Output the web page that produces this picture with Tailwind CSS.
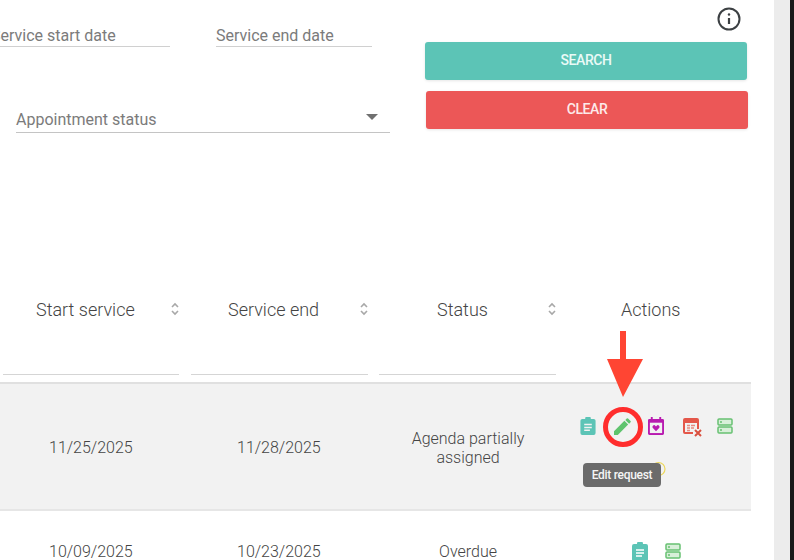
<!doctype html>
<html>
<head>
<meta charset="utf-8">
<script src="https://cdn.jsdelivr.net/npm/@tailwindcss/browser@4"></script>
</head>
<body class="m-0 h-[560px] w-[794px] overflow-hidden bg-[#191919] font-['Roboto',sans-serif]">
<div class="relative flex h-[560px] w-[790px]">
  <main class="h-full w-[774px] overflow-hidden bg-white">
    <section class="flex h-[280px] w-[774px]">
      <div class="w-[416px] shrink-0 overflow-hidden">
        <div class="flex pt-[26px]">
          <div class="ml-[-9px] w-[179px] shrink-0 whitespace-nowrap border-b border-[#d0d0d0] text-[16px] leading-[20px] text-[#7b7b7b]">Service start date</div>
          <div class="ml-[46px] w-[156px] shrink-0 whitespace-nowrap border-b border-[#d0d0d0] text-[16px] leading-[20px] text-[#7b7b7b]">Service end date</div>
        </div>
        <div class="ml-[16px] mt-[62px] flex w-[374px] items-center justify-between border-b border-[#c4c4c4] pb-[1px] pr-[12px] text-[16px] leading-[22px] text-[#7b7b7b]">
          <span>Appointment status</span>
          <svg width="12" height="6" viewBox="0 0 12 6" class="mb-[6px]"><path d="M0 0h12L6 6z" fill="#707070"/></svg>
        </div>
      </div>
      <div class="w-[358px] pt-[6px]">
        <div class="ml-[300px] h-[26px] w-[26px]">
          <svg width="26" height="26" viewBox="0 0 26 26" fill="none" stroke="#3c4043" stroke-width="2"><circle cx="13" cy="13" r="10.500"/><path d="M13 12v6" stroke-width="2.200"/><circle cx="13" cy="8.500" r="1.200" fill="#3c4043" stroke="none"/></svg>
        </div>
        <button class="ml-[9px] mt-[10px] block h-[38px] w-[322px] rounded-[3px] bg-[#5cc4b6] pb-[2px] text-[14px] font-medium tracking-[-0.4px] text-[#eafaf7] shadow-[0_1px_3px_rgba(0,0,0,0.1)]">SEARCH</button>
        <button class="ml-[10px] mt-[11px] block h-[38px] w-[322px] rounded-[3px] bg-[#ec5757] pb-[2px] text-[14px] font-medium tracking-[-0.4px] text-[#fdeaea] shadow-[0_1px_3px_rgba(0,0,0,0.1)]">CLEAR</button>
      </div>
    </section>

    <section class="w-[751px]">
      <div class="grid h-[104px] grid-cols-[180px_189px_189px_193px] border-b-2 border-[#e0e0e0] text-[18px] font-light text-[#444]">
        <div class="relative"><div class="pl-[36px] pt-[18px] leading-[24px]">Start service</div>
          <svg class="absolute left-[170px] top-[21px]" width="10" height="16" viewBox="0 0 10 16" fill="none" stroke="#a8a8a8" stroke-width="1.600"><path d="M2 6l3-3 3 3M2 10l3 3 3-3"/></svg>
          <div class="absolute bottom-[7px] left-[3px] h-px w-[176px] bg-[#d5d5d5]"></div></div>
        <div class="relative"><div class="pl-[48px] pt-[18px] leading-[24px]">Service end</div>
          <svg class="absolute left-[179px] top-[21px]" width="10" height="16" viewBox="0 0 10 16" fill="none" stroke="#a8a8a8" stroke-width="1.600"><path d="M2 6l3-3 3 3M2 10l3 3 3-3"/></svg>
          <div class="absolute bottom-[7px] left-[11px] h-px w-[177px] bg-[#d5d5d5]"></div></div>
        <div class="relative"><div class="pl-[68px] pt-[18px] leading-[24px]">Status</div>
          <svg class="absolute left-[178px] top-[21px]" width="10" height="16" viewBox="0 0 10 16" fill="none" stroke="#a8a8a8" stroke-width="1.600"><path d="M2 6l3-3 3 3M2 10l3 3 3-3"/></svg>
          <div class="absolute bottom-[7px] left-[10px] h-px w-[177px] bg-[#d5d5d5]"></div></div>
        <div class="pl-[63px] pt-[18px] leading-[24px]">Actions</div>
      </div>

      <div class="relative grid h-[127px] grid-cols-[180px_189px_189px_193px] border-b-2 border-[#e6e6e6] bg-[#f2f2f2] text-[16px] font-light text-[#444]">
        <div class="pl-[49px] pt-[53px] leading-[22px]">11/25/2025</div>
        <div class="pl-[57px] pt-[53px] leading-[22px]">11/28/2025</div>
        <div class="pl-[40px] pr-[31px] pt-[45px] text-center leading-[19px]">Agenda partially assigned</div>
        <div class="flex items-start pl-[21px] pt-[33px]">
          <svg width="18" height="18" viewBox="0 0 18 19"><path fill="#5cc4b6" d="M3 2h3a3 3 0 0 1 6 0h3a2 2 0 0 1 2 2v13a2 2 0 0 1-2 2H3a2 2 0 0 1-2-2V4a2 2 0 0 1 2-2z"/><path stroke="#f2f2f2" stroke-width="1.600" d="M5 8h8M5 11h8M5 14h6"/></svg>
          <svg class="ml-[17px] mt-[1px]" width="17" height="17" viewBox="0 0 18 18"><path fill="#5fc46e" d="M0 18v-4L11 3l4 4L4 18zM12 2l1.500-1.500a1 1 0 0 1 1.400 0l2.600 2.600a1 1 0 0 1 0 1.400L16 6z"/></svg>
          <svg class="ml-[17px]" width="16" height="18" viewBox="0 0 17 19"><path fill="#b81bb0" d="M3 0h2v2h7V0h2v2h1.500A1.500 1.500 0 0 1 17 3.500V17.500A1.500 1.500 0 0 1 15.500 19h-14A1.500 1.500 0 0 1 0 17.500V3.500A1.500 1.500 0 0 1 1.500 2H3z"/><rect x="2" y="6" width="13" height="11" fill="#f2f2f2"/><path fill="#b81bb0" d="M8.500 15l-3.300-3.300a1.800 1.800 0 0 1 2.600-2.500l.7.700.7-.7a1.800 1.800 0 0 1 2.600 2.500z"/></svg>
          <svg class="ml-[19px] mt-[1px]" width="19" height="19" viewBox="0 0 19 19"><path fill="#e4574a" d="M2 0h12a2 2 0 0 1 2 2v9h-2V5H2v9h8v2H2a2 2 0 0 1-2-2V2a2 2 0 0 1 2-2z"/><path stroke="#e8897f" stroke-width="1.300" d="M4 7.500h3M8 7.500h4M4 10h3M8 10h3M4 12.500h3"/><path stroke="#d9503f" stroke-width="2" d="M12 12l6 6M18 12l-6 6"/></svg>
          <svg class="ml-[15px] mt-[1px]" width="16" height="16" viewBox="0 0 16 16"><rect x="1" y="1" width="14" height="6" rx="1" fill="#d8efd9" stroke="#67c172" stroke-width="1.500"/><rect x="1" y="9" width="14" height="6" rx="1" fill="#d8efd9" stroke="#67c172" stroke-width="1.500"/><path stroke="#67c172" stroke-width="1.500" d="M3 4h2M3 12h2"/></svg>
        </div>
        <svg class="absolute left-[651px] top-[77px]" width="15" height="16" viewBox="0 0 15 16" fill="none"><circle cx="7.500" cy="8" r="6.500" stroke="#ecd75a" stroke-width="1.200"/></svg>
        <div class="absolute left-[583px] top-[79px] flex h-[24px] w-[78px] items-center justify-center rounded-[4px] bg-[#6b6b6b] text-[12px] font-medium tracking-[-0.3px] text-[#f5f5f5]">Edit request</div>
      </div>

      <div class="grid grid-cols-[180px_189px_189px_193px] text-[16px] font-light text-[#444]">
        <div class="pl-[49px] pt-[30px] leading-[22px]">10/09/2025</div>
        <div class="pl-[57px] pt-[30px] leading-[22px]">10/23/2025</div>
        <div class="pl-[40px] pr-[31px] pt-[30px] text-center leading-[22px]">Overdue</div>
        <div class="flex items-start pl-[73px] pt-[31px]">
          <svg width="18" height="19" viewBox="0 0 18 19"><path fill="#5cc4b6" d="M3 2h3a3 3 0 0 1 6 0h3a2 2 0 0 1 2 2v13a2 2 0 0 1-2 2H3a2 2 0 0 1-2-2V4a2 2 0 0 1 2-2z"/><path stroke="#fff" stroke-width="1.600" d="M5 8h8M5 11h8M5 14h6"/></svg>
          <svg class="ml-[16px] mt-[1px]" width="16" height="16" viewBox="0 0 16 16"><rect x="1" y="1" width="14" height="6" rx="1" fill="#d8efd9" stroke="#67c172" stroke-width="1.500"/><rect x="1" y="9" width="14" height="6" rx="1" fill="#d8efd9" stroke="#67c172" stroke-width="1.500"/><path stroke="#67c172" stroke-width="1.500" d="M3 4h2M3 12h2"/></svg>
        </div>
      </div>
    </section>
  </main>
  <aside class="h-full w-[16px] bg-[#ececec]"></aside>
  <svg class="absolute left-[603px] top-[330px]" width="40" height="120" viewBox="0 0 40 120" fill="none">
    <path d="M17 1h6v28h17L20 67 4 29h13z" fill="#ff4533"/>
    <circle cx="20" cy="97" r="17.500" stroke="#ff2d2d" stroke-width="5"/>
  </svg>
</div>
</body>
</html>
